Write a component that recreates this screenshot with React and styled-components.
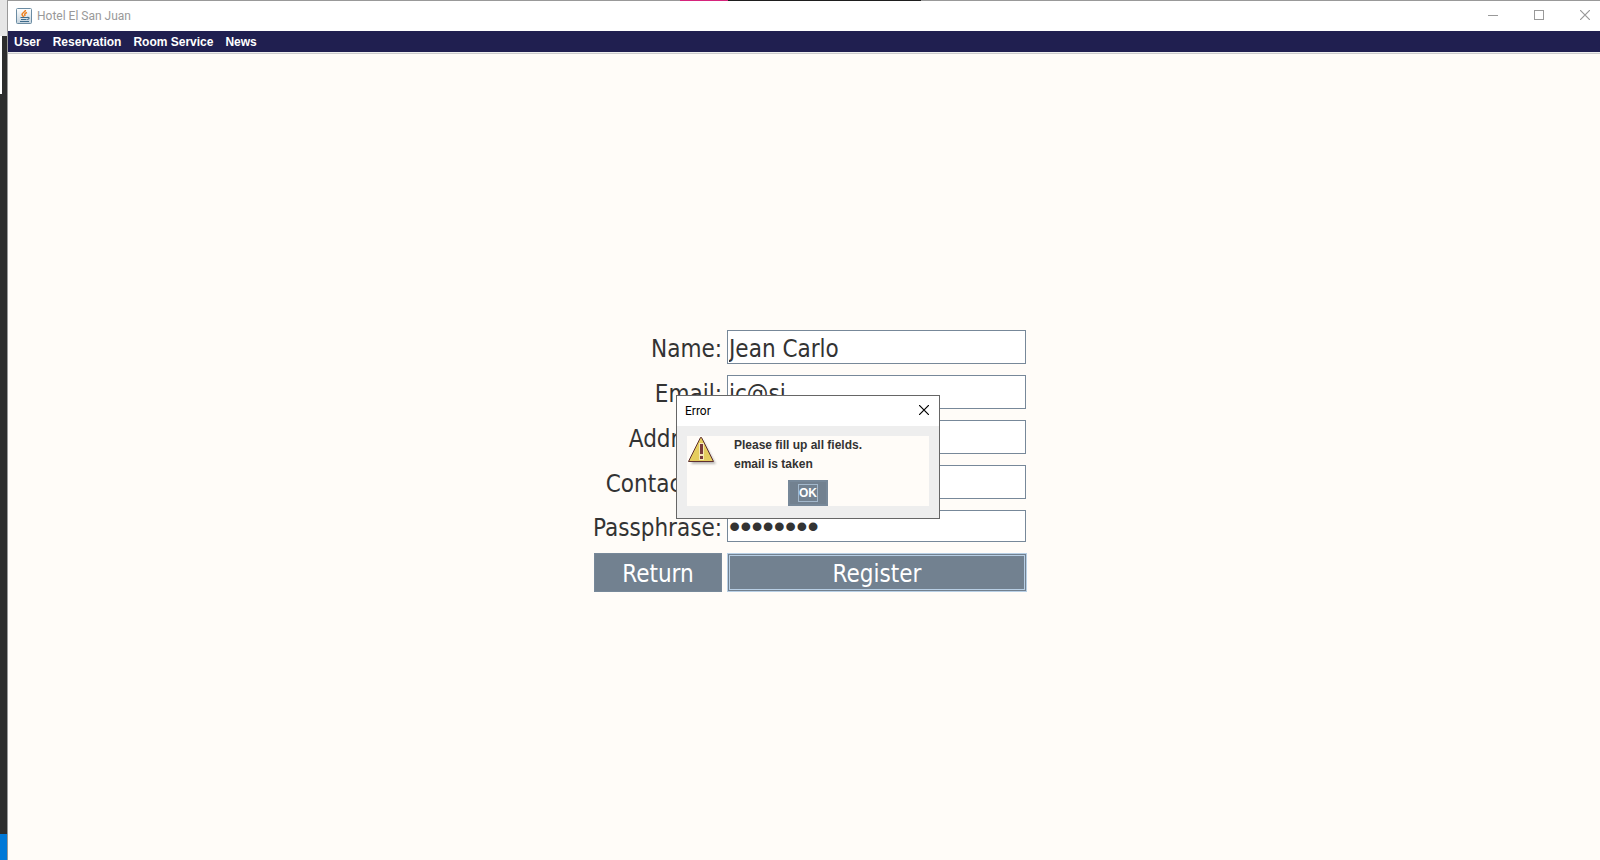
import React from "react";
import styled, { createGlobalStyle } from "styled-components";

const slate = "#728190";
const slateEdge = "#778899";
const sky = "#b8cfe5";
const paper = "#fffcf8";
const ink = "#333333";
const rule = "#999999";
const formFont = '"DejaVu Sans Condensed", "DejaVu Sans", sans-serif';
const chromeFont = 'Roboto, "Open Sans", sans-serif';
const swingFont = '"Liberation Sans", Arial, sans-serif';

const GlobalStyle = createGlobalStyle`
  *, *::before, *::after { box-sizing: border-box; }
  body { margin: 0; overflow: hidden; }
  button, input { font: inherit; color: inherit; margin: 0; border-radius: 0; outline: 0; }
`;

const Desktop = styled.div`
  display: flex;
  height: 100vh;
  overflow: hidden;
  background: #2d2d2d;
`;

const Backdrop = styled.div`
  display: flex;
  flex-direction: column;
  flex: 0 0 7px;
`;

const BackdropPart = styled.div`
  flex: ${(p) => (p.$height ? `0 0 ${p.$height}px` : "1")};
  background: ${(p) => p.$color};
  border-left: ${(p) => (p.$edge ? `2px solid ${p.$edge}` : "0")};
`;

/* The frame is maximised, so its right and bottom edges run off the screen. */
const Frame = styled.div`
  display: flex;
  flex-direction: column;
  flex: 1;
  margin: 0 -13px -8px 0;
  border-left: 1px solid ${rule};
  background: ${paper};
`;

const TopEdge = styled.div`
  display: flex;
  flex: 0 0 1px;
  padding-left: 672px;
  background: ${rule};
`;

const EdgePart = styled.div`
  width: ${(p) => p.$width}px;
  background: ${(p) => p.$color};
`;

const TitleBar = styled.header`
  display: flex;
  align-items: center;
  flex: 0 0 30px;
  padding: 0 5px 0 8px;
  gap: 5px;
  background: #ffffff;
  color: ${rule};
  font: 12px/16px ${chromeFont};
`;

const TitleText = styled.span`
  flex: 1;
`;

const WindowButton = styled.button`
  display: flex;
  align-items: center;
  justify-content: center;
  align-self: flex-start;
  width: ${(p) => p.$width || 46}px;
  height: 28px;
  padding: 0;
  border: 0;
  background: transparent;
  color: ${(p) => p.$color || rule};
`;

const Controls = styled.div`
  display: flex;
  align-self: flex-start;
`;

const MenuBar = styled.nav`
  display: flex;
  flex: 0 0 23px;
  gap: 12px;
  padding: 0 6px;
  background: #201f50;
  border-bottom: 1px solid #cccccc;
  box-shadow: inset 0 -1px #eeeeee;
`;

const MenuItem = styled.button`
  height: 22px;
  padding: 0;
  border: 0;
  background: transparent;
  color: #ffffff;
  font: bold 12px/22px ${swingFont};
`;

const Content = styled.main`
  display: flex;
  flex: 1;
  align-items: center;
  justify-content: center;
`;

const Form = styled.form`
  position: relative;
  display: grid;
  grid-template-columns: 128px 300px;
  column-gap: 5px;
  row-gap: 11px;
  color: ${ink};
  font: 24px/28px ${formFont};
`;

const Label = styled.label`
  align-self: center;
  justify-self: end;
  padding-top: 4px;
`;

const Field = styled.input`
  width: 299px;
  height: 34px;
  padding: 4px 1px 0;
  border: 1px solid ${slateEdge};
  background: #ffffff;
`;

const PasswordField = styled(Field)`
  height: 32px;
  padding: 0 1px;
  font: 32px/30px ${swingFont};
`;

const FormButton = styled.button`
  height: 39px;
  padding: 2px 0 0;
  border: 1px solid ${(p) => (p.$focused ? sky : slateEdge)};
  background: ${slate};
  color: #ffffff;
  box-shadow: ${(p) => (p.$focused ? `inset 0 0 0 1px ${slate}, inset 0 0 0 2px ${sky}` : "none")};
`;

const Dialog = styled.section`
  position: absolute;
  top: 65px;
  left: 82px;
  width: 264px;
  border: 1px solid #666666;
  background: #eeeeee;
`;

const DialogTitle = styled.header`
  display: flex;
  align-items: center;
  justify-content: space-between;
  height: 30px;
  padding-left: 8px;
  background: #ffffff;
  color: #000000;
  font: 12px/16px ${chromeFont};
`;

const DialogBody = styled.div`
  display: grid;
  grid-template-columns: 47px 1fr;
  margin: 10px 10px 12px;
  background: ${paper};
  font: bold 12px/19px ${swingFont};
`;

const Message = styled.p`
  margin: 0 0 6px;
`;

const ConfirmButton = styled.button`
  grid-column: 1 / -1;
  justify-self: center;
  width: 40px;
  height: 26px;
  padding: 0;
  border: 2px solid ${slateEdge};
  background: ${slate};
  color: #ffffff;
`;

const FocusText = styled.span`
  display: block;
  width: 20px;
  margin: 0 auto;
  border: 1px solid #a3b8cc;
  line-height: 16px;
`;

const JavaIcon = () => (
  <svg width="16" height="16" viewBox="0 0 16 16" aria-hidden="true">
    <defs>
      <linearGradient id="tile" x1="0" y1="0" x2="0" y2="1">
        <stop offset="0" stopColor="#ffffff" />
        <stop offset="1" stopColor="#c5d3dd" />
      </linearGradient>
    </defs>
    <rect x=".5" y=".5" width="15" height="15" rx="1" fill="url(#tile)" stroke="#6b8ca3" />
    <path d="M9.500 2C9.500 4 6 4.500 6 6.500C6 7.500 7.500 8 7.500 9M11 4.500C9 5.200 8 6.200 9.200 8" fill="none" stroke="#ee7f1c" strokeWidth="1.500" />
    <path d="M4.500 9.500H11M5 11.500H10.500M4 13.500H13M11 9.500C13.800 8.800 13.800 11.200 11.200 11.600" fill="none" stroke="#3f6c8c" strokeWidth="1.200" />
  </svg>
);

const WarningIcon = () => (
  <svg width="32" height="32" viewBox="0 0 32 32" aria-hidden="true">
    <defs>
      <filter id="soft" x="-20%" y="-20%" width="140%" height="140%">
        <feGaussianBlur stdDeviation="1" />
      </filter>
    </defs>
    <path d="M16 4L29 28H4Z" fill="#666" opacity=".45" filter="url(#soft)" />
    <path d="M13.500 1.500H14.500L26.500 25.500H1.500Z" fill="#e5cd5e" stroke="#5f3030" strokeLinejoin="round" />
    <path d="M12 7H17V19H12ZM12 19H17V24H12Z" fill="#f5e9b4" />
    <path d="M13 8H16V18H13ZM13 20H16V23H13Z" fill="#7a3c3c" />
  </svg>
);

const CloseGlyph = () => (
  <svg width="10" height="10" viewBox="0 0 10 10" aria-hidden="true">
    <path d="M0 0L10 10M10 0L0 10" stroke="currentColor" strokeWidth="1.200" fill="none" />
  </svg>
);

const MinimizeGlyph = () => (
  <svg width="10" height="10" viewBox="0 0 10 10" aria-hidden="true">
    <path d="M0 5.500H10" stroke="currentColor" />
  </svg>
);

const MaximizeGlyph = () => (
  <svg width="10" height="10" viewBox="0 0 10 10" aria-hidden="true">
    <rect x=".5" y=".5" width="9" height="9" fill="none" stroke="currentColor" />
  </svg>
);

const menus = ["User", "Reservation", "Room Service", "News"];

const fields = [
  { id: "name", label: "Name:", value: "Jean Carlo" },
  { id: "email", label: "Email:", value: "jc@sj" },
  { id: "address", label: "Address:", value: "" },
  { id: "contact", label: "Contact #:", value: "" },
];

export default function App() {
  return (
    <Desktop>
      <GlobalStyle />
      <Backdrop>
        <BackdropPart $height={36} $color="#e6e6e6" />
        <BackdropPart $height={58} $color="#2d2d2d" $edge="#ffffff" />
        <BackdropPart $color="#2d2d2d" />
        <BackdropPart $height={26} $color="#0078d7" />
      </Backdrop>
      <Frame>
        <TopEdge>
          <EdgePart $width={48} $color="#d6247c" />
          <EdgePart $width={193} $color="#1e1e1e" />
        </TopEdge>
        <TitleBar>
          <JavaIcon />
          <TitleText>Hotel El San Juan</TitleText>
          <Controls>
            <WindowButton type="button" aria-label="Minimize"><MinimizeGlyph /></WindowButton>
            <WindowButton type="button" aria-label="Maximize"><MaximizeGlyph /></WindowButton>
            <WindowButton type="button" aria-label="Close"><CloseGlyph /></WindowButton>
          </Controls>
        </TitleBar>
        <MenuBar>
          {menus.map((name) => (
            <MenuItem key={name} type="button">{name}</MenuItem>
          ))}
        </MenuBar>
        <Content>
          <Form onSubmit={(e) => e.preventDefault()}>
            {fields.map((f) => (
              <React.Fragment key={f.id}>
                <Label htmlFor={f.id}>{f.label}</Label>
                <Field id={f.id} type="text" defaultValue={f.value} autoComplete="off" spellCheck={false} />
              </React.Fragment>
            ))}
            <Label htmlFor="passphrase">Passphrase:</Label>
            <PasswordField id="passphrase" type="password" defaultValue="password" autoComplete="off" />
            <FormButton type="button">Return</FormButton>
            <FormButton type="submit" $focused>Register</FormButton>
            <Dialog role="alertdialog" aria-label="Error">
              <DialogTitle>
                Error
                <WindowButton type="button" aria-label="Close dialog" $width={30} $color="#000000"><CloseGlyph /></WindowButton>
              </DialogTitle>
              <DialogBody>
                <WarningIcon />
                <Message>Please fill up all fields.<br />email is taken</Message>
                <ConfirmButton type="button"><FocusText>OK</FocusText></ConfirmButton>
              </DialogBody>
            </Dialog>
          </Form>
        </Content>
      </Frame>
    </Desktop>
  );
}
